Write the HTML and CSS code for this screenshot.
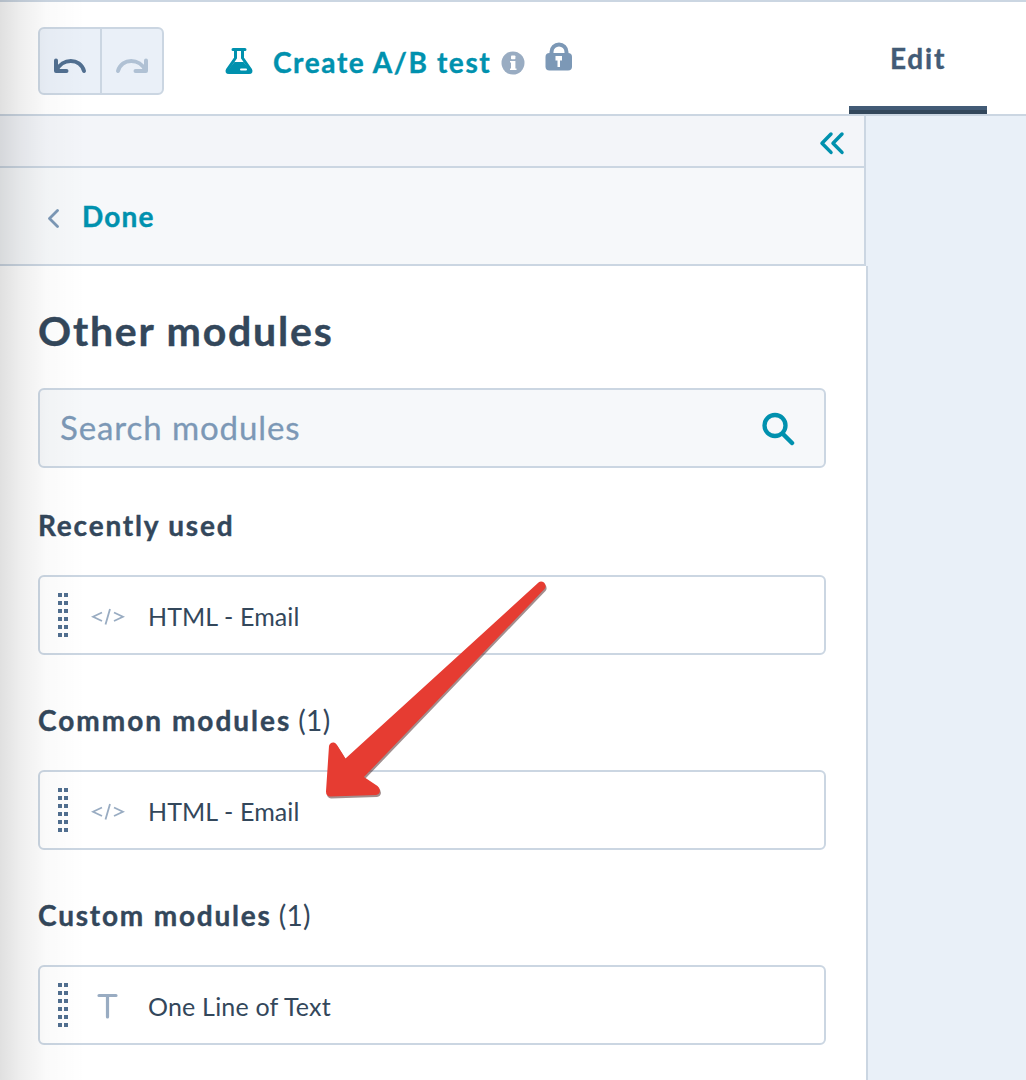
FILE: index.html
```html
<!DOCTYPE html>
<html lang="en">
<head>
<meta charset="utf-8">
<title>Email editor</title>
<link rel="stylesheet" href="styles.css">
</head>
<body>
<div class="app">
  <header class="toolbar">
    <div class="history">
      <button class="history-btn" aria-label="Undo">
        <svg width="62" height="64" viewBox="0 0 62 64" fill="none" stroke="#516f90" stroke-width="4" stroke-linecap="round" stroke-linejoin="round"><path d="M16 31.500V42H26.500M16.500 41.500C22 29 40 28.500 44 42"/></svg>
      </button>
      <button class="history-btn" aria-label="Redo">
        <svg width="62" height="64" viewBox="0 0 62 64" fill="none" stroke="#b0c1d4" stroke-width="4" stroke-linecap="round" stroke-linejoin="round"><path d="M44 31.500V42H33.500M43.500 41.500C38 29 20 28.500 16 42"/></svg>
      </button>
    </div>
    <a class="ab-test">
      <svg class="flask" width="28" height="26" viewBox="0 0 28 26"><path d="M8 1.500H20M10.500 2V10L2.500 21.500Q1 24.500 4 24.500H24Q27 24.500 25.500 21.500L17.500 10V2" fill="none" stroke="#0091ae" stroke-width="3" stroke-linecap="round" stroke-linejoin="round"/><path d="M9.500 14H18.500L25 22V24H3V22Z" fill="#0091ae"/><rect x="15" y="20.500" width="7" height="2" rx="1" fill="#fff"/></svg>
      <span class="ab-label">Create A/B test</span>
    </a>
    <svg class="info" width="24" height="24" viewBox="0 0 24 24"><circle cx="12" cy="12" r="11.500" fill="#99acc2"/><rect x="10" y="4.500" width="4.400" height="3.700" rx=".8" fill="#fff"/><path d="M9 10h5.400v7.500H15.500V19H9v-1.500h1V11.500H9Z" fill="#fff"/></svg>
    <svg class="lock" width="28" height="30" viewBox="0 0 28 30"><path d="M6.500 14V10a7.500 7.500 0 0 1 15 0v4" fill="none" stroke="#7c98b6" stroke-width="4"/><rect x=".5" y="11" width="26.500" height="17.500" rx="4" fill="#7c98b6"/><path d="M10.500 14h6.500v4.500h-2V25h-2.500v-6.500h-2Z" fill="#fff"/></svg>
    <div class="tab"><span class="tab-label">Edit</span></div>
  </header>
  <main class="workspace">
    <aside class="sidebar">
      <div class="collapse-bar">
        <svg width="26" height="24" viewBox="0 0 26 24" fill="none" stroke="#0091ae" stroke-width="3.500" stroke-linecap="round" stroke-linejoin="round"><path d="M12 3L3 12.200L12 21.400M23 3L14 12.200L23 21.400"/></svg>
      </div>
      <div class="back-bar">
        <svg width="14" height="20" viewBox="0 0 14 20" fill="none" stroke="#7c98b6" stroke-width="2.800" stroke-linecap="round" stroke-linejoin="round"><path d="M11.500 2.500L3.500 10.500L11.500 18.500"/></svg>
        <span class="back-label">Done</span>
      </div>
      <div class="modules">
        <h1 class="title">Other modules</h1>
        <div class="search">
          <span class="placeholder">Search modules</span>
          <svg width="34" height="34" viewBox="0 0 34 34" fill="none" stroke="#0091ae" stroke-linecap="round"><circle cx="14" cy="13.500" r="10.500" stroke-width="4.300"/><path d="M22 22L31 31" stroke-width="4.500"/></svg>
        </div>
        <h2 class="group"><span class="recent">Recently used</span></h2>
        <div class="card">
          <div class="grip"></div>
          <svg class="kind" width="34" height="20" viewBox="0 0 34 20" fill="none" stroke="#99acc2" stroke-width="1.800"><path d="M11 5.500L2 9.700L11 14M23 5.500L32 9.700L23 14M19 2L14.500 17.500"/></svg>
          <span class="name">HTML - Email</span>
        </div>
        <h2 class="group"><span class="common">Common modules</span><span class="count">(1)</span></h2>
        <div class="card">
          <div class="grip"></div>
          <svg class="kind" width="34" height="20" viewBox="0 0 34 20" fill="none" stroke="#99acc2" stroke-width="1.800"><path d="M11 5.500L2 9.700L11 14M23 5.500L32 9.700L23 14M19 2L14.500 17.500"/></svg>
          <span class="name">HTML - Email</span>
        </div>
        <h2 class="group"><span class="custom">Custom modules</span><span class="count">(1)</span></h2>
        <div class="card">
          <div class="grip"></div>
          <svg class="kind letter" width="34" height="28" viewBox="0 0 34 28" fill="none" stroke="#99acc2" stroke-width="3.200" stroke-linecap="round"><path d="M8 3.500H25M16.500 3.500V25"/></svg>
          <span class="name line">One Line of Text</span>
        </div>
      </div>
    </aside>
  </main>
  <div class="edge-shade"></div>
  <svg class="pointer" width="230" height="226" viewBox="320 576 230 226"><path d="M538.500 582.500Q541 580.500 544 582.500Q547 586 544.500 589L364 777L377.500 786Q380 788 380 791Q379.500 794.500 376 795L330 796.500Q326 796 326 791.500L329 746Q330 742 334 742.500Q336 743 337 745L345.500 758.500Z" fill="#e63c32"/></svg>
</div>
</body>
</html>
```
FILE: styles.css
```css
* { box-sizing: border-box; }
body { margin: 0; background: #fff; font-family: Lato, "Open Sans", sans-serif; color: #33475b; }
svg { display: block; flex: none; }
.app { position: relative; width: 1026px; height: 1080px; overflow: hidden; display: flex; flex-direction: column; }
.toolbar { height: 116px; flex: none; display: flex; align-items: flex-start; border-top: 2px solid #cbd6e2; border-bottom: 2px solid #cbd6e2; }
.history { display: flex; width: 126px; height: 68px; margin: 25px 0 0 38px; border: 2px solid #cbd6e2; border-radius: 6px; background: #eaf0f8; overflow: hidden; }
.history-btn { width: 61px; padding: 0; border: 0; background: none; overflow: hidden; }
.history-btn + .history-btn { width: 63px; border-left: 2px solid #cbd6e2; }
.ab-test { display: flex; align-items: flex-start; margin: 40px 0 0 61px; width: 276px; color: #0091ae; }
.flask { margin: 6px 20px 0 0; }
.ab-label, .tab-label, .back-label { font-size: 28px; line-height: 40px; font-weight: 700; white-space: nowrap; -webkit-text-stroke: .4px; }
.ab-label { letter-spacing: 1.6px; }
.info { margin: 49px 0 0 0; }
.lock { margin: 40px 0 0 20px; }
.tab { width: 138px; height: 112px; margin-left: auto; margin-right: 39px; padding-top: 36px; text-align: center; color: #425b76; background: linear-gradient(#425b76 0 4px, #33475b 4px 8px) bottom / 100% 8px no-repeat; }
.tab-label { letter-spacing: 1.8px; }
.workspace { flex: 1; background: #e9f0f8; }
.sidebar { width: 868px; height: 964px; }
.collapse-bar { width: 866px; height: 52px; display: flex; justify-content: flex-end; padding: 15px 19px 0 0; background: #f3f5f9; border-right: 2px solid #cbd6e2; border-bottom: 2px solid #cbd6e2; }
.back-bar { width: 866px; height: 98px; display: flex; align-items: center; gap: 22px; padding: 3px 0 0 46px; background: #f6f8fa; border-right: 2px solid #cbd6e2; border-bottom: 2px solid #cbd6e2; }
.back-label { margin-top: -3px; color: #0091ae; letter-spacing: 1.2px; }
.modules { height: 814px; padding: 35px 40px 0 38px; background: #fff; border-right: 2px solid #cbd6e2; }
.title { margin: 0 0 27px; font-size: 41px; line-height: 60px; font-weight: 700; letter-spacing: 1.8px; -webkit-text-stroke: .4px; }
.search { height: 80px; display: flex; align-items: center; justify-content: space-between; padding: 0 29px 0 20px; border: 2px solid #cbd6e2; border-radius: 6px; background: #f6f8fa; }
.placeholder { font-size: 33px; margin-top: -2px; color: #7c98b6; letter-spacing: .9px; -webkit-text-stroke: .3px; }
.search svg { margin-top: 2px; }
.group { display: flex; gap: 7px; height: 40px; margin: 37px 0 30px; font-size: 28px; line-height: 40px; font-weight: 700; white-space: nowrap; letter-spacing: 1.8px; }
.group span:first-child { -webkit-text-stroke: .4px; }
.card + .group { margin-top: 45px; }
.common { letter-spacing: 2px; }
.group .count { font-weight: 400; letter-spacing: .3px; }
.card { height: 80px; display: flex; align-items: center; border: 2px solid #cbd6e2; border-radius: 6px; padding: 2px 0 0 18px; }
.grip { width: 10px; height: 44px; margin: -2px 23px 0 0; background: repeating-linear-gradient(#516f90 0 4px, transparent 4px 8px) left / 4px 100% no-repeat, repeating-linear-gradient(#516f90 0 4px, transparent 4px 8px) right / 4px 100% no-repeat; }
.kind { margin: 2px 23px 0 0; }
.kind.letter { margin-top: 0; }
.name { font-size: 25px; letter-spacing: .1px; white-space: nowrap; }
.name.line { letter-spacing: .2px; }
.edge-shade { position: absolute; inset: 0 auto 0 0; width: 86px; pointer-events: none; background: linear-gradient(90deg, rgba(0,0,0,.12), rgba(0,0,0,.065) 24%, rgba(0,0,0,.02) 54%, transparent); }
.pointer { position: absolute; left: 320px; top: 576px; filter: drop-shadow(1px 2px .5px rgba(70,30,30,.5)); }
```
